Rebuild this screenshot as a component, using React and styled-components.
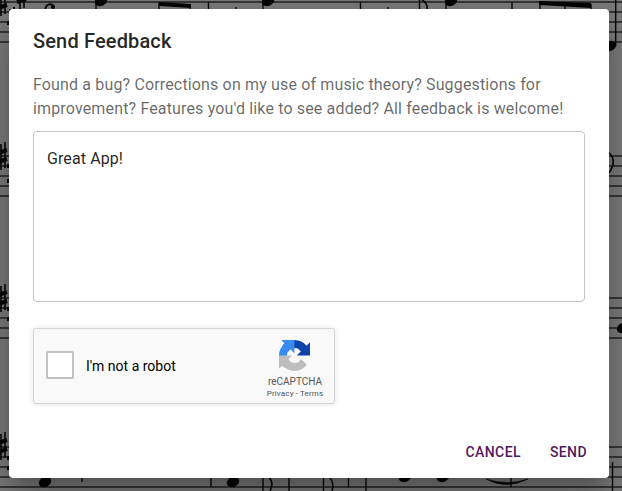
import React, { useState } from "react";
import styled, { createGlobalStyle } from "styled-components";

const GlobalStyle = createGlobalStyle`
  *, *::before, *::after { box-sizing: border-box; }
  body { margin: 0; overflow: hidden; font-family: Roboto, sans-serif; background: #7c7c7c; }
`;

const Screen = styled.div`
  position: relative;
  width: 100vw;
  height: 100vh;
  padding: 9px 13px 13px 9px;
`;

const Sheet = styled.svg`
  position: absolute;
  inset: 0;
  width: 622px;
  height: 491px;
`;

const Dialog = styled.section`
  position: relative;
  display: flex;
  flex-direction: column;
  width: 600px;
  height: 469px;
  padding: 16px 24px 8px;
  border-radius: 4px;
  background: #fff;
  box-shadow: 0 11px 15px -7px rgba(0, 0, 0, 0.2), 0 24px 38px 3px rgba(0, 0, 0, 0.14),
    0 9px 46px 8px rgba(0, 0, 0, 0.12);
`;

const Title = styled.h2`
  margin: 0;
  font-size: 20px;
  font-weight: 500;
  line-height: 32px;
  letter-spacing: 0.15px;
  color: rgba(0, 0, 0, 0.87);
`;

const Description = styled.p`
  margin: 16px 0 10px;
  font-size: 16px;
  line-height: 24px;
  letter-spacing: 0.15px;
  color: rgba(0, 0, 0, 0.6);
  white-space: nowrap;
`;

const Message = styled.textarea`
  display: block;
  flex: none;
  width: 552px;
  height: 171px;
  padding: 15px 13px;
  border: 1px solid #c4c4c4;
  border-radius: 4px;
  outline: none;
  resize: none;
  background: transparent;
  font: 400 16px/23px Roboto, sans-serif;
  letter-spacing: 0.1px;
  color: rgba(0, 0, 0, 0.87);
`;

const Captcha = styled.div`
  display: flex;
  align-items: center;
  flex: none;
  width: 302px;
  height: 76px;
  margin-top: 26px;
  padding-left: 12px;
  border: 1px solid #d3d3d3;
  border-radius: 3px;
  background: #f9f9f9;
  box-shadow: 0 0 4px 1px rgba(0, 0, 0, 0.08);
`;

const CheckBox = styled.button`
  width: 28px;
  height: 28px;
  margin-bottom: 2px;
  padding: 0;
  border: 2px solid #c1c1c1;
  border-radius: 2px;
  background: #fff;
`;

const CaptchaLabel = styled.span`
  flex: 1;
  margin-left: 12px;
  font-size: 14px;
  line-height: 17px;
  color: #000;
`;

const Brand = styled.div`
  display: flex;
  flex-direction: column;
  align-items: center;
  align-self: flex-start;
  width: 58px;
  margin: 11px 10px 0 0;
  color: #555;
`;

const Logo = styled.svg`
  width: 31px;
  height: 31px;
  margin-right: 1px;
`;

const BrandName = styled.div`
  margin-top: 6px;
  font-size: 10px;
  line-height: 10px;
`;

const Legal = styled.div`
  margin-top: 2px;
  font-size: 8px;
  line-height: 10px;
  letter-spacing: 0.15px;
  white-space: pre;
`;

const Actions = styled.footer`
  display: flex;
  justify-content: flex-end;
  gap: 13px;
  margin: auto -10px 0 0;
`;

const Action = styled.button`
  height: 36px;
  padding: 0 8px;
  border: 0;
  background: transparent;
  font: 500 14px/24px Roboto, sans-serif;
  letter-spacing: 0.4px;
  color: #56195d;
`;

const staffTops = [2, 156, 298, 447];
const sharps = [[0, -12], [0, 142], [0, 284], [0, 432], [19, -18]];
const heads = [[101, 1], [268, 1], [451, 1], [610, 46], [623, 328], [45, 482], [233, 482], [405, 477], [443, 477]];
const stems = [
  [96, 1, 20], [159, 3, 20], [190, 4, 20], [208.5, 2, 20], [236, 7, 20], [263, 1, 20],
  [360.5, 2, 20], [388, 7, 20], [419.5, 0, 20], [446, 2, 20], [512, 2, 20],
  [540, 2, 20], [565, 4, 20], [591, 4, 20], [615.7, 0, 46], [612.5, 462, 491],
  [82, 470, 482], [211, 470, 487], [263, 470, 491], [289, 470, 491],
  [323.5, 470, 491], [348.5, 470, 487], [366, 470, 491], [511, 470, 487],
];

function MusicSheet() {
  return (
    <Sheet viewBox="0 0 622 491" aria-hidden="true">
      {staffTops.map((top) =>
        [0, 10, 20, 30, 40].map((dy) => (
          <path key={`${top}-${dy}`} d={`M0 ${top + dy}h622`} stroke="#383838" strokeWidth="1.8" />
        ))
      )}
      {stems.map(([x, y1, y2], i) => (
        <path key={i} d={`M${x} ${y1}V${y2}`} stroke="#080808" strokeWidth="1.4" />
      ))}
      {sharps.map(([x, y], i) => (
        <path
          key={i}
          transform={`translate(${x} ${y})`}
          d="M1 2v26M5 0v26"
          fill="none"
          stroke="#080808"
          strokeWidth="1.6"
        />
      ))}
      {sharps.map(([x, y], i) => (
        <path key={i} transform={`translate(${x} ${y})`} d="M-2 11l9-3M-2 20l9-3" stroke="#080808" strokeWidth="4" />
      ))}
      {heads.map(([x, y], i) => (
        <ellipse key={i} cx={x} cy={y} rx="6.4" ry="4.9" transform={`rotate(-25 ${x} ${y})`} fill="#050505" />
      ))}
      <path d="M159 2l32 2v4l-32-2zM539 1l52 2v5l-52-3z" fill="#050505" />
      <path d="M45 10c1-7 7-7 9-3" fill="none" stroke="#080808" strokeWidth="1.8" />
      <circle cx="53" cy="7" r="2" />
      <path d="M422 0q6 3 5 10M608 152q10 8 1 21M267 476q8 5 3 15M328 476q7 6 4 15" fill="none" stroke="#080808" strokeWidth="1.6" />
      <path d="M486 479q20 11 42 0-20 7-42 0z" fill="#050505" stroke="#050505" strokeWidth=".6" />
      <path d="M10 9v3M14 9V7M8 21v4M8 164v4M8 179v4M8 307v4M8 317v4M8 456v4M8 466v4" stroke="#080808" strokeWidth="2" />
    </Sheet>
  );
}

function CaptchaLogo() {
  return (
    <Logo viewBox="0 0 64 64" aria-hidden="true">
      <path fill="#0d43ad" d="M64 31.955l-.033-1.37V4.687l-7.16 7.16C50.948 4.674 42.033.093 32.05.093c-10.4 0-19.622 4.96-25.458 12.64l11.736 11.86a15.55 15.55 0 0 1 4.754-5.334c2.05-1.6 4.952-2.906 8.968-2.906.485 0 .86.057 1.135.163 4.976.393 9.288 3.14 11.828 7.124l-8.307 8.307L64 31.953" />
      <path fill="#388af0" d="M31.862.094l-1.37.033H4.594l7.16 7.16C4.58 13.147 0 22.06 0 32.046c0 10.4 4.96 19.622 12.64 25.458L24.5 45.768a15.55 15.55 0 0 1-5.334-4.754c-1.6-2.05-2.906-4.952-2.906-8.968 0-.485.057-.86.163-1.135.393-4.976 3.14-9.288 7.124-11.828l8.307 8.307L31.86.095" />
      <path fill="#bdbdbd" d="M.001 32.045l.033 1.37v25.898l7.16-7.16c5.86 7.173 14.774 11.754 24.76 11.754 10.4 0 19.622-4.96 25.458-12.64l-11.736-11.86a15.55 15.55 0 0 1-4.754 5.334c-2.05 1.6-4.952 2.906-8.968 2.906-.485 0-.86-.057-1.135-.163-4.976-.393-9.288-3.14-11.828-7.124l8.307-8.307c-10.522.04-22.4.066-27.295-.005" />
    </Logo>
  );
}

export default function App() {
  const [message, setMessage] = useState("Great App!");
  return (
    <Screen>
      <GlobalStyle />
      <MusicSheet />
      <Dialog role="dialog" aria-label="Send Feedback">
        <Title>Send Feedback</Title>
        <Description>
          Found a bug? Corrections on my use of music theory? Suggestions for
          <br />
          improvement? Features you'd like to see added? All feedback is welcome!
        </Description>
        <Message spellCheck={false} value={message} onChange={(e) => setMessage(e.target.value)} />
        <Captcha>
          <CheckBox role="checkbox" aria-checked="false" aria-label="I'm not a robot" />
          <CaptchaLabel>I'm not a robot</CaptchaLabel>
          <Brand>
            <CaptchaLogo />
            <BrandName>reCAPTCHA</BrandName>
            <Legal>Privacy - Terms</Legal>
          </Brand>
        </Captcha>
        <Actions>
          <Action>CANCEL</Action>
          <Action>SEND</Action>
        </Actions>
      </Dialog>
    </Screen>
  );
}
